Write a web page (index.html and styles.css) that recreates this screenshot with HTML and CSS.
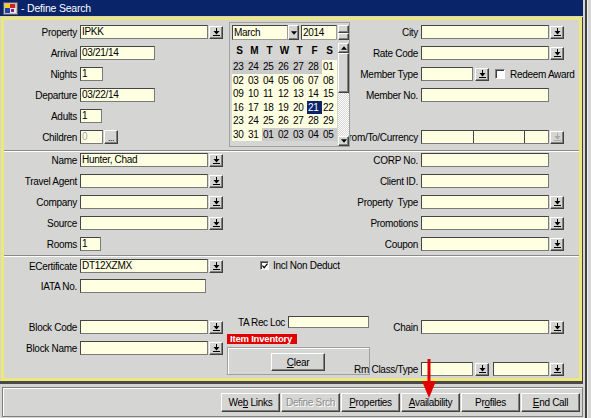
FILE: index.html
```html
<!DOCTYPE html>
<html>
<head>
<meta charset="utf-8">
<title>Define Search</title>
<link rel="stylesheet" href="styles.css">
</head>
<body>
<svg class="defs" width="0" height="0" aria-hidden="true">
  <defs>
    <symbol id="dn" viewBox="0 0 7 8"><rect x="3" y="0" width="1" height="3"/><polygon points="0.5,3 6.5,3 3.5,6.5"/><rect x="0" y="7" width="7" height="1"/></symbol>
    <symbol id="tri-d" viewBox="0 0 7 4"><polygon points="0,0 7,0 3.5,4"/></symbol>
    <symbol id="tri-u" viewBox="0 0 7 4"><polygon points="0,4 7,4 3.5,0"/></symbol>
    <symbol id="tick" viewBox="0 0 7 7"><polyline points="0.5,3 2.5,5.5 6.5,0.8" fill="none" stroke="#000" stroke-width="1.4"/></symbol>
  </defs>
</svg>
<div class="screen">
  <div class="window">
    <div class="titlebar">
      <svg class="appicon" width="15" height="13" viewBox="0 0 15 13">
        <rect x="0.5" y="0.5" width="14" height="12" fill="#c0c0c0" stroke="#5a5a5a"/>
        <rect x="2" y="2" width="5" height="4" fill="#f2d21b"/>
        <rect x="7" y="2" width="5" height="4" fill="#d42020"/>
        <rect x="2" y="6" width="5" height="5" fill="#2040b0"/>
        <rect x="7" y="6" width="6" height="5" fill="#e8e8e8"/>
        <rect x="8" y="7" width="3" height="3" fill="#8a1a8a"/>
      </svg>
      <span class="ttext">- Define Search</span>
    </div>
    <div class="frame">
      <div class="panel">
        <div class="sec sec1">
          <div class="col-l">
            <div class="row"><span class="lbl">Property</span><div class="in w128">IPKK</div><div class="dd"><svg><use href="#dn"/></svg></div></div>
            <div class="row"><span class="lbl">Arrival</span><div class="in w75">03/21/14</div></div>
            <div class="row"><span class="lbl">Nights</span><div class="in w23">1</div></div>
            <div class="row"><span class="lbl">Departure</span><div class="in w75">03/22/14</div></div>
            <div class="row"><span class="lbl">Adults</span><div class="in w22">1</div></div>
            <div class="row"><span class="lbl">Children</span><div class="in w23 dis">0</div><div class="dots">...</div></div>
          </div>
          <div class="col-m"></div>
          <div class="col-r">
            <div class="row"><span class="lbl">City</span><div class="in w128"></div><div class="dd"><svg><use href="#dn"/></svg></div></div>
            <div class="row"><span class="lbl">Rate Code</span><div class="in w128"></div><div class="dd"><svg><use href="#dn"/></svg></div></div>
            <div class="row"><span class="lbl">Member Type</span><div class="in w52"></div><div class="dd wide"><svg><use href="#dn"/></svg></div><span class="chk redeem"></span><span class="chktext">Redeem Award</span></div>
            <div class="row"><span class="lbl">Member No.</span><div class="in w128"></div></div>
            <div class="row"></div>
            <div class="row"><span class="lbl">From/To/Currency</span><div class="multi"><span class="m1"></span><span class="m2"></span><span class="m3"></span></div><div class="dd dis"><svg><use href="#dn"/></svg></div></div>
          </div>
        </div>
        <div class="sep"></div>
        <div class="sec sec2">
          <div class="col-l">
            <div class="row"><span class="lbl">Name</span><div class="in w128">Hunter, Chad</div><div class="dd"><svg><use href="#dn"/></svg></div></div>
            <div class="row"><span class="lbl">Travel Agent</span><div class="in w128"></div><div class="dd"><svg><use href="#dn"/></svg></div></div>
            <div class="row"><span class="lbl">Company</span><div class="in w128"></div><div class="dd"><svg><use href="#dn"/></svg></div></div>
            <div class="row"><span class="lbl">Source</span><div class="in w128"></div><div class="dd"><svg><use href="#dn"/></svg></div></div>
            <div class="row"><span class="lbl">Rooms</span><div class="in w21">1</div></div>
          </div>
          <div class="col-m"></div>
          <div class="col-r">
            <div class="row"><span class="lbl">CORP No.</span><div class="in w128"></div></div>
            <div class="row"><span class="lbl">Client ID.</span><div class="in w128"></div></div>
            <div class="row"><span class="lbl">Property&nbsp; Type</span><div class="in w128"></div><div class="dd"><svg><use href="#dn"/></svg></div></div>
            <div class="row"><span class="lbl">Promotions</span><div class="in w128"></div><div class="dd"><svg><use href="#dn"/></svg></div></div>
            <div class="row"><span class="lbl">Coupon</span><div class="in w128"></div><div class="dd"><svg><use href="#dn"/></svg></div></div>
          </div>
        </div>
        <div class="sep"></div>
        <div class="sec sec3">
          <div class="col-l col3">
            <div class="row r-ecert"><span class="lbl">ECertificate</span><div class="in w128">DT12XZMX</div><div class="dd"><svg><use href="#dn"/></svg></div></div>
            <div class="row r-iata"><span class="lbl">IATA No.</span><div class="in w126"></div></div>
            <div class="row r-bcode"><span class="lbl">Block Code</span><div class="in w128"></div><div class="dd"><svg><use href="#dn"/></svg></div></div>
            <div class="row r-bname"><span class="lbl">Block Name</span><div class="in w128"></div><div class="dd"><svg><use href="#dn"/></svg></div></div>
          </div>
          <div class="col-m col-m3">
            <div class="incl"><span class="chk small"><svg><use href="#tick"/></svg></span><span>Incl Non Deduct</span></div>
            <div class="tarow"><span class="talbl">TA Rec Loc</span><div class="in w81 h12"></div></div>
            <div class="iteminv">Item Inventory</div>
            <div class="grp"><div class="btn clear"><span><u>C</u>lear</span></div></div>
          </div>
          <div class="col-r col3">
            <div class="row r-chain"><span class="lbl">Chain</span><div class="in w128"></div><div class="dd"><svg><use href="#dn"/></svg></div></div>
            <div class="row r-rm"><span class="lbl">Rm Class/Type</span><div class="in w52"></div><div class="dd wide"><svg><use href="#dn"/></svg></div><div class="in w56 gap4"></div><div class="dd"><svg><use href="#dn"/></svg></div></div>
          </div>
        </div>

        <div class="cal">
          <div class="cal-top">
            <div class="month"><span class="mtext">March</span><span class="mbtn"><svg><use href="#tri-d"/></svg></span></div>
            <div class="year">2014</div>
            <div class="spin"><span></span><span></span></div>
          </div>
          <div class="cal-body">
            <div class="days">
              <div class="dh">S</div><div class="dh">M</div><div class="dh">T</div><div class="dh">W</div><div class="dh">T</div><div class="dh">F</div><div class="dh">S</div>
              <div class="d o">23</div><div class="d o">24</div><div class="d o">25</div><div class="d o">26</div><div class="d o">27</div><div class="d o">28</div><div class="d">01</div>
              <div class="d">02</div><div class="d">03</div><div class="d">04</div><div class="d">05</div><div class="d">06</div><div class="d">07</div><div class="d">08</div>
              <div class="d">09</div><div class="d">10</div><div class="d">11</div><div class="d">12</div><div class="d">13</div><div class="d">14</div><div class="d">15</div>
              <div class="d">16</div><div class="d">17</div><div class="d">18</div><div class="d">19</div><div class="d">20</div><div class="d sel">21</div><div class="d">22</div>
              <div class="d">23</div><div class="d">24</div><div class="d">25</div><div class="d">26</div><div class="d">27</div><div class="d">28</div><div class="d">29</div>
              <div class="d">30</div><div class="d">31</div><div class="d o">01</div><div class="d o">02</div><div class="d o">03</div><div class="d o">04</div><div class="d o">05</div>
            </div>
            <div class="vscroll">
              <div class="sb-btn"><svg><use href="#tri-u"/></svg></div>
              <div class="sb-thumb"></div>
              <div class="sb-track"></div>
              <div class="sb-btn"><svg><use href="#tri-d"/></svg></div>
            </div>
          </div>
        </div>
      </div>
    </div>
    <div class="btnbar">
      <div class="btngroup">
        <div class="btn"><span>We<u>b</u> Links</span></div>
        <div class="btn dis"><span>Define Srch</span></div>
        <div class="btn"><span><u>P</u>roperties</span></div>
        <div class="btn"><span><u>A</u>vailability</span></div>
        <div class="btn"><span>Pr<u>o</u>files</span></div>
        <div class="btn"><span><u>E</u>nd Call</span></div>
      </div>
    </div>
    <svg class="arrow" viewBox="0 0 14 40" width="14" height="40">
      <rect x="5.5" y="0" width="3" height="24" fill="#e00000"/>
      <polygon points="0,22 14,22 7,39" fill="#e00000"/>
    </svg>
  </div>
  <div class="rightframe"></div>
</div>
</body>
</html>
```
FILE: styles.css
```css
* { box-sizing: border-box; }
html, body { margin: 0; padding: 0; }
body {
  width: 591px;
  height: 418px;
  overflow: hidden;
  background: #d5d5d3;
  font-family: "Liberation Sans", Arial, sans-serif;
  font-size: 10px;
  letter-spacing: -0.3px;
  color: #000;
}
.defs { position: absolute; width: 0; height: 0; overflow: hidden; }
.screen { display: flex; height: 418px; }
.window {
  position: relative;
  width: 583px;
  height: 418px;
  display: flex;
  flex-direction: column;
  flex: none;
}
.rightframe {
  flex: 1;
  background: linear-gradient(to right, #d5d5d3 0 2px, #404040 2px 4px, #ececec 4px 5px, #d5d5d3 5px);
}

/* title */
.titlebar {
  height: 16px;
  flex: none;
  background: #0a246a;
  color: #fff;
  display: flex;
  align-items: center;
  padding-left: 3px;
  gap: 3px;
  margin-bottom: 1px;
  font-size: 10.5px;
  letter-spacing: -0.2px;
}
.appicon { flex: none; }
.ttext { white-space: nowrap; }

/* main panel */
.frame {
  flex: none;
  height: 367px;
  border-right: 1px solid #404040;
  border-bottom: 3px solid #4a4a4a;
}
.panel {
  position: relative;
  margin-left: 1px;
  height: 364px;
  border: 3px solid #ece97a;
  background: #d5d5d3;
}
.sec { display: flex; }
.sec1 { padding: 5px 0 6px; }
.sec2 { padding: 1px 0 4px; }
.sec3 { padding: 0; height: 121px; }
.sep {
  height: 2px;
  border-top: 1px solid #8a8a8a;
  border-bottom: 1px solid #fff;
}
.col-l { width: 221px; flex: none; display: flex; flex-direction: column; gap: 7px; }
.col-m { width: 103px; flex: none; }
.col-r { width: 251px; flex: none; display: flex; flex-direction: column; gap: 7px; }
.col3 { gap: 0; }

.row { display: flex; align-items: center; height: 14px; }
.lbl { flex: none; text-align: right; white-space: nowrap; margin-right: 3px; }
.col-l .lbl { width: 73px; }
.col-r .lbl { width: 90px; }

.in {
  flex: none;
  height: 14px;
  background: #ffffe1;
  border: 1px solid;
  border-color: #454545 #7a7a7a #7a7a7a #454545;
  padding-left: 1px;
  line-height: 12px;
  white-space: nowrap;
  overflow: hidden;
}
.in.dis { color: #a8a8a8; }
.h12 { height: 12px; line-height: 10px; }
.w21 { width: 21px; }
.w22 { width: 22px; }
.w23 { width: 23px; }
.w52 { width: 52px; }
.w56 { width: 56px; }
.w75 { width: 75px; }
.w81 { width: 81px; }
.w126 { width: 126px; }
.w128 { width: 128px; }
.gap4 { margin-left: 4px; }

.dd, .dots, .btn, .mbtn, .spin span, .sb-btn, .sb-thumb {
  background: #d5d5d3;
  border: 1px solid;
  border-color: #fff #404040 #404040 #fff;
  box-shadow: inset -1px -1px #808080;
}
.dd {
  flex: none;
  width: 14px;
  height: 13px;
  margin-left: 1px;
  display: flex;
  align-items: center;
  justify-content: center;
}
.dd.wide { margin-left: 2px; }
.dd svg { width: 7px; height: 8px; fill: #000; }
.dd.dis svg { fill: #a8a8a8; }
.dots {
  flex: none;
  width: 14px;
  height: 14px;
  margin-left: 1px;
  font-size: 9px;
  line-height: 14px;
  text-align: center;
  letter-spacing: -0.5px;
}

.multi {
  flex: none;
  display: flex;
  width: 128px;
  height: 14px;
  background: #ffffe1;
  border: 1px solid;
  border-color: #454545 #7a7a7a #7a7a7a #454545;
}
.multi span { height: 100%; }
.m1 { width: 51px; }
.m2 { width: 51px; border-left: 1px solid #454545; }
.m3 { flex: 1; border-left: 1px solid #454545; }

.chk {
  flex: none;
  width: 10px;
  height: 10px;
  background: #fff;
  border: 1px solid;
  border-color: #808080 #fff #fff #808080;
  box-shadow: inset 1px 1px #404040;
  display: flex;
  align-items: center;
  justify-content: center;
}
.chk.small { width: 9px; height: 9px; }
.chk svg { width: 6px; height: 6px; margin: 1px 0 0 1px; }
.redeem { margin-left: 6px; }
.chktext { margin-left: 5px; white-space: nowrap; }

/* section 3 */
.r-ecert { margin-top: 2px; }
.r-iata { margin-top: 6px; }
.r-bcode { margin-top: 27px; }
.r-bname { margin-top: 7px; }
.r-chain { margin-top: 63px; }
.r-rm { margin-top: 28px; }
.col-m3 { display: flex; flex-direction: column; }
.incl {
  margin-top: 3px;
  padding-left: 35px;
  display: flex;
  align-items: center;
  gap: 4px;
  height: 10px;
  white-space: nowrap;
}
.tarow {
  margin-top: 46px;
  padding-left: 13px;
  display: flex;
  align-items: center;
  height: 12px;
  white-space: nowrap;
}
.talbl { flex: none; margin-right: 3px; letter-spacing: -0.4px; }
.iteminv {
  margin: 6px 0 0 2px;
  width: 70px;
  height: 10px;
  background: #e00000;
  color: #fff;
  font-weight: bold;
  font-size: 9.5px;
  letter-spacing: -0.2px;
  line-height: 10px;
  padding-left: 3px;
  white-space: nowrap;
  flex: none;
}
.grp {
  margin: 3px 0 0 2px;
  width: 143px;
  height: 28px;
  flex: none;
  border: 1px solid #a0a0a0;
  box-shadow: inset 1px 1px #fff;
  padding: 5px 0 0 43px;
}
.btn {
  flex: none;
  width: 59px;
  height: 19px;
  display: flex;
  align-items: center;
  justify-content: center;
  white-space: nowrap;
}
.btn.dis { color: #8c8c8c; text-shadow: 1px 1px #fff; }
.btn.clear { width: 54px; height: 18px; }

/* calendar */
.cal {
  position: absolute;
  left: 225px;
  top: 2px;
  width: 121px;
  height: 125px;
  background: #d5d5d3;
  border: 1px solid #a0a0a0;
  z-index: 2;
}
.cal-top { display: flex; margin: 2px 0 0 2px; height: 15px; }
.month { display: flex; width: 67px; height: 15px; flex: none; }
.mtext, .year {
  background: #ffffe1;
  border: 1px solid;
  border-color: #454545 #9a9a9a #9a9a9a #454545;
  padding-left: 1px;
  line-height: 13px;
}
.mtext { flex: 1; }
.mbtn { width: 11px; flex: none; display: flex; align-items: center; justify-content: center; }
.mbtn svg, .sb-btn svg { width: 6px; height: 4px; fill: #000; }
.year { width: 36px; margin-left: 2px; flex: none; }
.spin { width: 11px; margin-left: 1px; display: flex; flex-direction: column; flex: none; }
.spin span { flex: 1; }
.cal-body { display: flex; margin: 2px 0 0 2px; height: 104px; }
.days {
  display: grid;
  grid-template-columns: repeat(7, 15px);
  grid-template-rows: 18px repeat(6, 13.5px);
  width: 105px;
  flex: none;
  align-content: start;
}
.dh { font-weight: bold; text-align: center; line-height: 18px; font-size: 10px; letter-spacing: 0; }
.d { background: #ffffe1; padding-left: 1px; line-height: 13.5px; font-size: 10px; letter-spacing: -0.4px; }
.d.o { background: #cbcbcb; }
.d.sel { background: #0a246a; color: #fff; }
.vscroll { width: 11px; margin: 1px 0 0 1px; height: 103px; display: flex; flex-direction: column; flex: none; }
.sb-btn { height: 10px; flex: none; display: flex; align-items: center; justify-content: center; }
.sb-thumb { height: 40px; flex: none; }
.sb-track { flex: 1; background: repeating-conic-gradient(#fff 0 25%, #d5d5d3 0 50%) 0 0 / 2px 2px; }

/* bottom bar */
.btnbar { flex: none; height: 34px; padding: 3px 0 1px 2px; }
.btngroup {
  height: 30px;
  border: 1px solid #808080;
  box-shadow: inset 1px 1px #fff;
  display: flex;
  justify-content: flex-end;
  gap: 1px;
  padding: 5px 2px 0 0;
}
.arrow { position: absolute; left: 422px; top: 359px; }
```
